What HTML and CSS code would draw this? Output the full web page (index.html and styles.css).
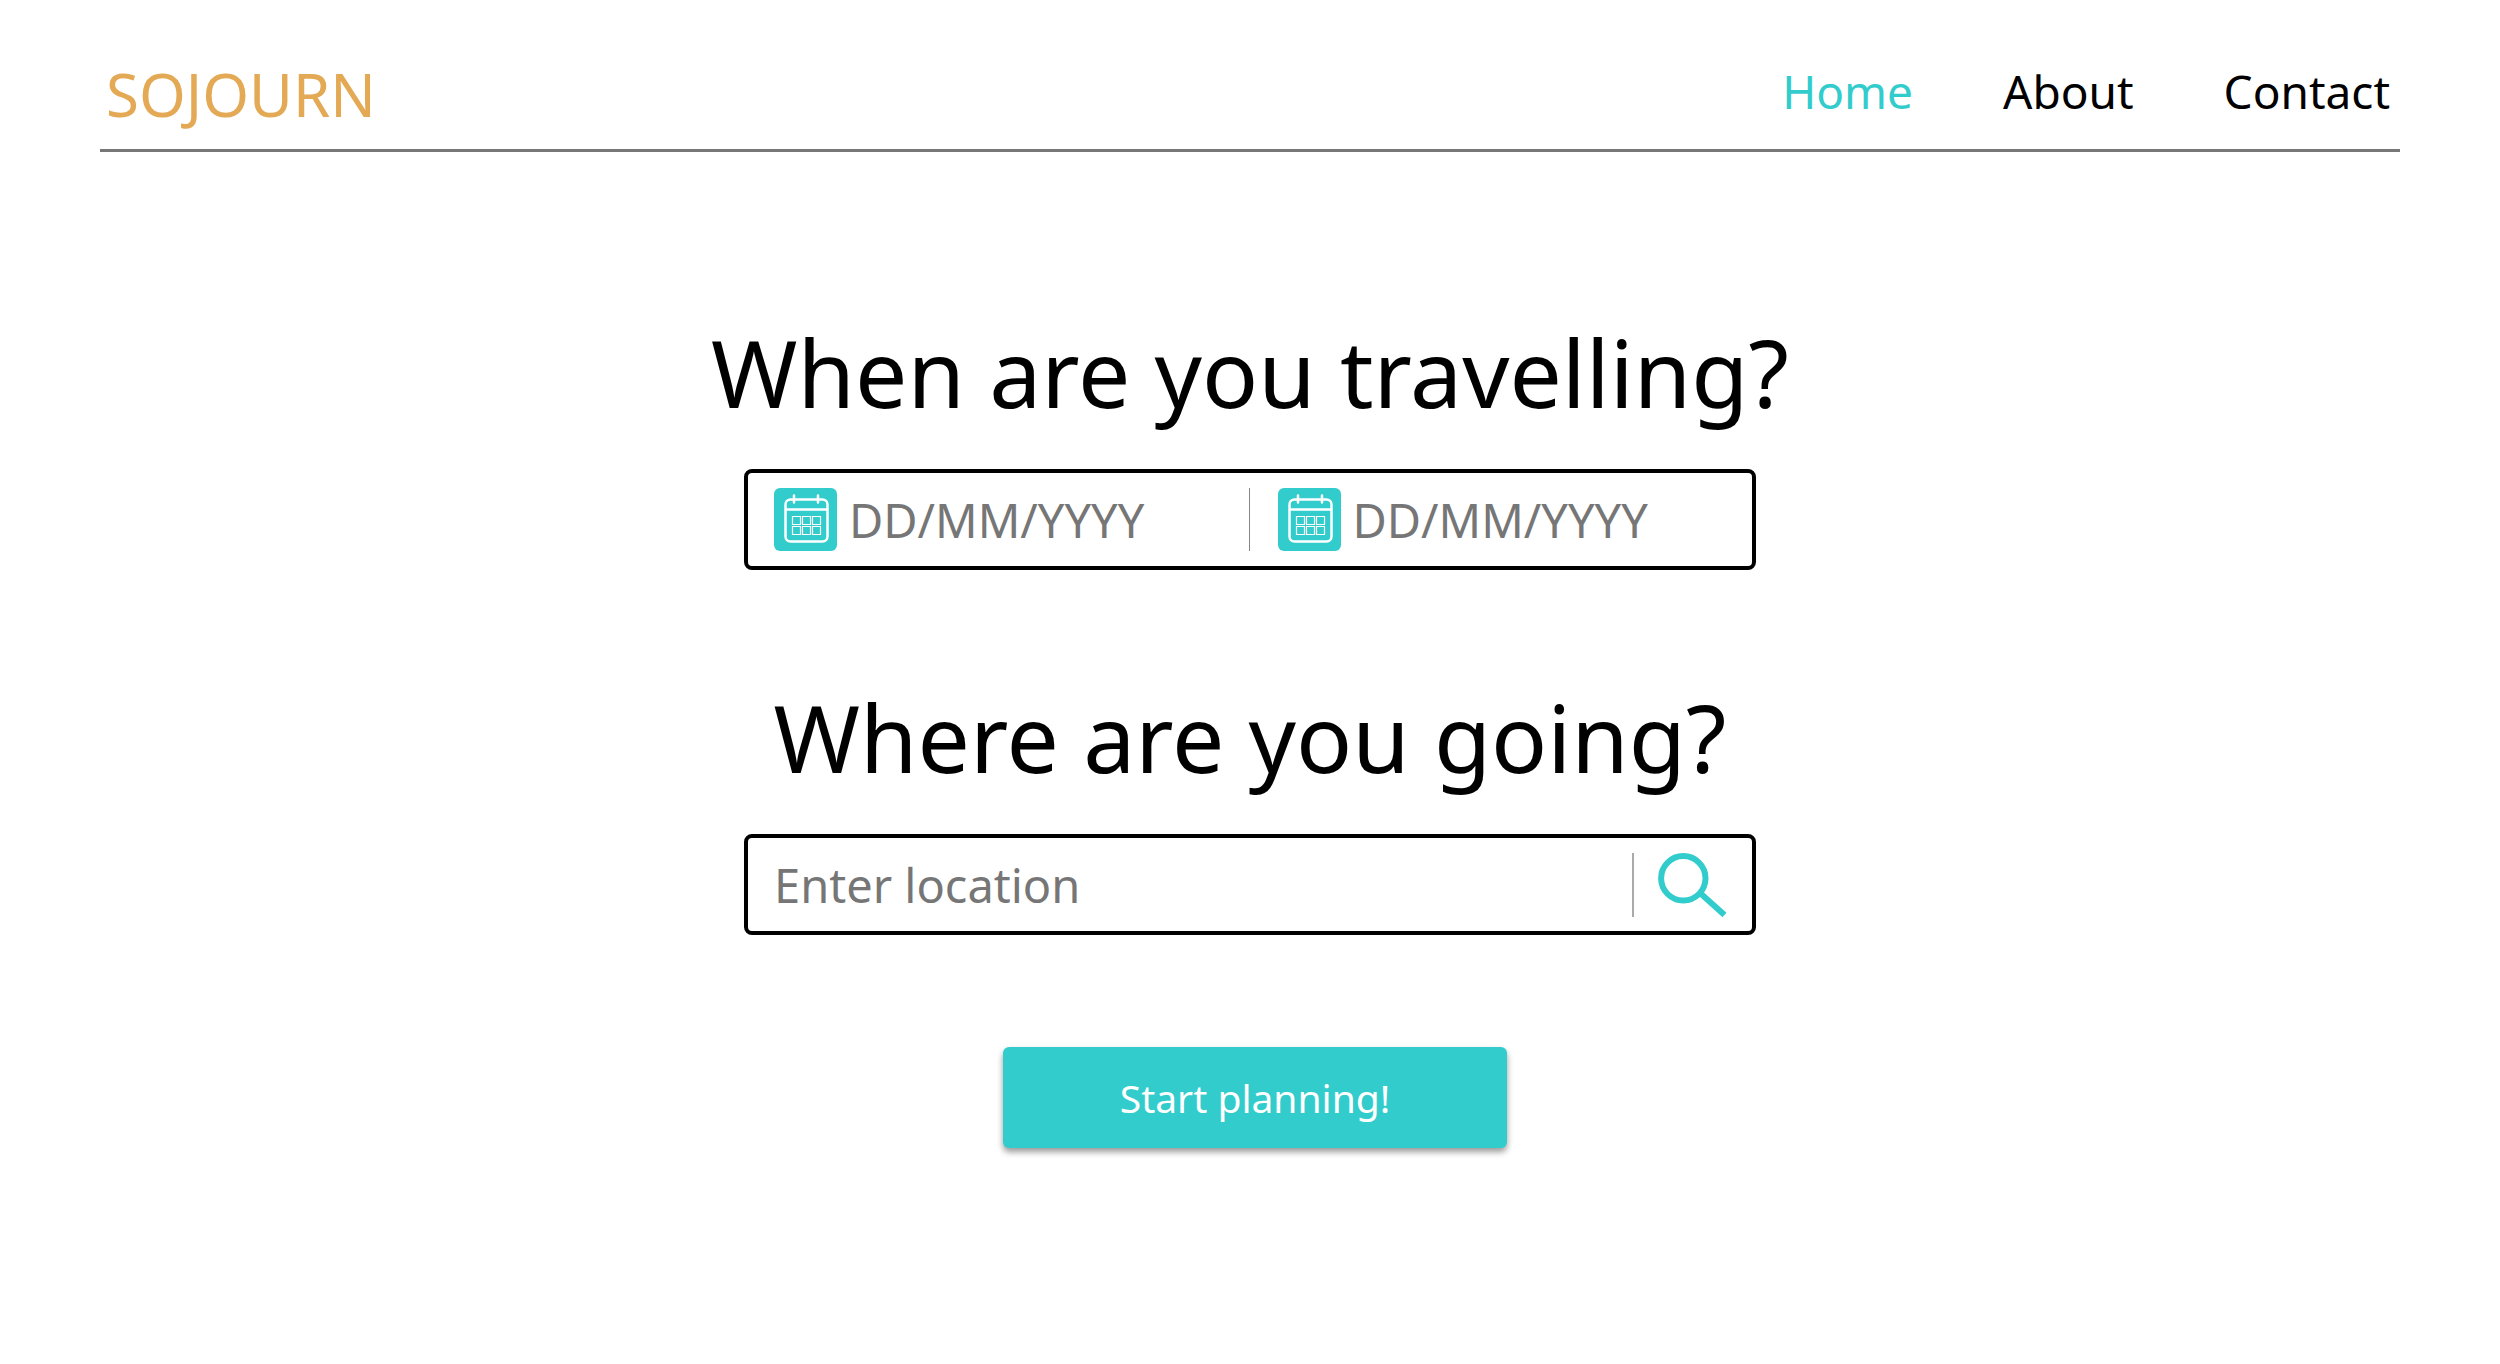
FILE: index.html
```html
<!DOCTYPE html>
<html lang="en">
<head>
    <meta charset="UTF-8">
    <meta name="viewport" content="width=device-width, initial-scale=1.0">
    <title>Sojourn</title>
    <link rel="stylesheet" href="styles.css">
</head>
<body>
    <header class="header">
        <a class="logo" href="#">SOJOURN</a>
        <nav class="nav">
            <a class="active" href="#">Home</a>
            <a href="#about">About</a>
            <a href="#contact">Contact</a>
        </nav>
    </header>

    <main>
        <form class="planner">
            <h1 class="question">When are you travelling?</h1>
            <div class="box dates">
                <div class="date">
                    <label for="start" aria-label="Start date">
                        <svg class="calendar" viewBox="0 0 63 63">
                            <rect class="tile" width="63" height="63" rx="6"/>
                            <rect x="11.5" y="11.5" width="42" height="42" rx="5"/>
                            <path d="M12 21.5h41M20 7.5v7M44 7.5v7"/>
                            <path class="cells" d="M18.5 28.5h8v8h-8zM28.5 28.5h8v8h-8zM38.5 28.5h8v8h-8zM18.5 38.5h8v8h-8zM28.5 38.5h8v8h-8zM38.5 38.5h8v8h-8z"/>
                        </svg>
                    </label>
                    <input type="text" id="start" placeholder="DD/MM/YYYY">
                </div>
                <div class="date">
                    <label for="end" aria-label="End date">
                        <svg class="calendar" viewBox="0 0 63 63">
                            <rect class="tile" width="63" height="63" rx="6"/>
                            <rect x="11.5" y="11.5" width="42" height="42" rx="5"/>
                            <path d="M12 21.5h41M20 7.5v7M44 7.5v7"/>
                            <path class="cells" d="M18.5 28.5h8v8h-8zM28.5 28.5h8v8h-8zM38.5 28.5h8v8h-8zM18.5 38.5h8v8h-8zM28.5 38.5h8v8h-8zM38.5 38.5h8v8h-8z"/>
                        </svg>
                    </label>
                    <input type="text" id="end" placeholder="DD/MM/YYYY">
                </div>
            </div>

            <h1 class="question"><label for="location">Where are you going?</label></h1>
            <div class="box">
                <input type="text" id="location" placeholder="Enter location">
                <button type="button" class="search" aria-label="Search">
                    <svg viewBox="0 0 70 64">
                        <circle cx="25.3" cy="25.3" r="22.2"/>
                        <path d="M41.5 39.5L66.5 62"/>
                    </svg>
                </button>
            </div>

            <div class="actions">
                <button type="submit" class="start">Start planning!</button>
            </div>
        </form>
    </main>
</body>
</html>
```

FILE: styles.css
```css
* {
    box-sizing: border-box;
}
body {
    font-family: 'Noto Sans', sans-serif;
    min-height: 100vh;
    margin: 0;
    padding: 0 4%;
    background-color: #fff;
    color: #000;
}
.header {
    display: flex;
    justify-content: space-between;
    align-items: center;
    height: 152px;
    padding: 38px 10px 0 6px;
    border-bottom: 3px solid #777;
}
.header a {
    color: inherit;
    text-decoration: none;
}
.header .logo {
    color: #e3a955;
    font-size: 60px;
}
.nav {
    display: flex;
    gap: 90px;
    padding-bottom: 6px;
    font-size: 46px;
}
.nav .active {
    color: #33cccc;
}
.planner {
    display: flex;
    flex-direction: column;
    align-items: center;
    padding: 156px 0 40px;
}
.question {
    margin: 0 0 33px;
    font-size: 93px;
    font-weight: normal;
    line-height: 128px;
}
.box {
    display: flex;
    align-items: center;
    width: 44%;
    height: 101px;
    margin-bottom: 103px;
    padding: 0 24px 0 26px;
    border: 4px solid #000;
    border-radius: 8px;
}
.box input {
    flex: 1;
    min-width: 0;
    padding: 0;
    border: none;
    outline: none;
    background: none;
    font-family: inherit;
    font-size: 47px;
}
.box input::placeholder {
    color: #767676;
    opacity: 1;
}
.dates {
    padding: 0;
}
.date {
    display: flex;
    flex: 1;
    align-items: center;
    gap: 12px;
    min-width: 0;
    height: 63px;
    padding-left: 26px;
}
.date + .date {
    padding-left: 28px;
    border-left: 1px solid #888;
}
.calendar {
    display: block;
    width: 63px;
    height: 63px;
    fill: none;
    stroke: #fff;
    stroke-width: 2.5;
    stroke-linecap: round;
}
.calendar .tile {
    fill: #33cccc;
    stroke: none;
}
.calendar .cells {
    stroke-width: 1.2;
}
.search {
    height: 64px;
    padding: 0 0 0 24px;
    border: none;
    border-left: 2px solid #aaa;
    background: none;
    cursor: pointer;
}
.search svg {
    display: block;
    width: 70px;
    height: 64px;
    fill: none;
    stroke: #33cccc;
    stroke-width: 6;
}
.actions {
    display: flex;
    justify-content: center;
    width: 100%;
    padding: 9px 0 0 10px;
}
.start {
    width: 22%;
    height: 101px;
    border: none;
    border-radius: 6px;
    background-color: #33cccc;
    box-shadow: 0 4px 6px rgba(0, 0, 0, 0.4);
    color: #fff;
    font-family: inherit;
    font-size: 39px;
    cursor: pointer;
}
```
